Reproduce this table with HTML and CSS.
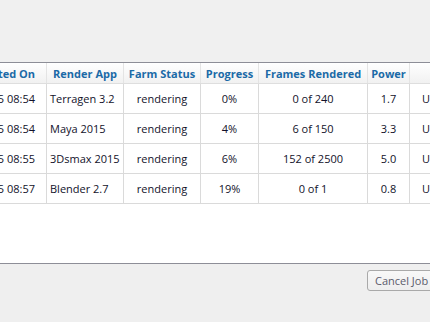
FILE: index.html
```html
<!DOCTYPE html>
<html>
<head>
<meta charset="utf-8">
<link rel="stylesheet" href="styles.css">
</head>
<body>
<div class="window">
  <div class="toolbar-space"></div>
  <div class="grid-panel">
    <div class="grid">
      <div class="row head">
        <div class="cell c-date">Submitted On</div>
        <div class="cell">Render App</div>
        <div class="cell">Farm Status</div>
        <div class="cell">Progress</div>
        <div class="cell">Frames Rendered</div>
        <div class="cell">Power</div>
        <div class="cell c-user">Submitted By</div>
      </div>
      <div class="row">
        <div class="cell c-date">03/25/2015 08:54</div>
        <div class="cell c-app">Terragen 3.2</div>
        <div class="cell">rendering</div>
        <div class="cell">0%</div>
        <div class="cell">0 of 240</div>
        <div class="cell">1.7</div>
        <div class="cell c-user">Unknown</div>
      </div>
      <div class="row">
        <div class="cell c-date">03/25/2015 08:54</div>
        <div class="cell c-app">Maya 2015</div>
        <div class="cell">rendering</div>
        <div class="cell">4%</div>
        <div class="cell">6 of 150</div>
        <div class="cell">3.3</div>
        <div class="cell c-user">Unknown</div>
      </div>
      <div class="row">
        <div class="cell c-date">03/25/2015 08:55</div>
        <div class="cell c-app">3Dsmax 2015</div>
        <div class="cell">rendering</div>
        <div class="cell">6%</div>
        <div class="cell">152 of 2500</div>
        <div class="cell">5.0</div>
        <div class="cell c-user">Unknown</div>
      </div>
      <div class="row">
        <div class="cell c-date">03/25/2015 08:57</div>
        <div class="cell c-app">Blender 2.7</div>
        <div class="cell">rendering</div>
        <div class="cell">19%</div>
        <div class="cell">0 of 1</div>
        <div class="cell">0.8</div>
        <div class="cell c-user">Unknown</div>
      </div>
    </div>
  </div>
  <div class="footer">
    <button class="btn" type="button">Cancel Job</button>
  </div>
</div>
</body>
</html>
```

FILE: styles.css
```css
html, body {
  margin: 0;
  padding: 0;
}

body {
  width: 430px;
  height: 322px;
  overflow: hidden;
  background: #efefef;
  font-family: "Open Sans", "Noto Sans", sans-serif;
  font-size: 11px;
  color: #12122a;
}

.window {
  display: flex;
  flex-direction: column;
  height: 322px;
}

.toolbar-space {
  height: 62px;
  background: #f0f0f0;
}

.grid-panel {
  height: 200px;
  background: #ffffff;
  border-top: 1px solid #8d8e97;
  border-bottom: 1px solid #8d8e97;
  overflow: hidden;
}

.grid {
  margin-left: -80px;
  width: 620px;
}

.row {
  display: grid;
  grid-template-columns: 127px 77px 77px 58px 109px 42px 130px;
  height: 30px;
  box-sizing: border-box;
  border-bottom: 1px solid #dadada;
}

.row.head {
  height: 21px;
  background: linear-gradient(#ffffff, #f1f1f1);
  border-bottom-color: #dedede;
  color: #1b6aa7;
  font-weight: 700;
}

.cell {
  display: flex;
  align-items: center;
  justify-content: center;
  white-space: nowrap;
  overflow: hidden;
  border-right: 1px solid #dadada;
}

.row.head .cell {
  border-right-color: #e4e4e4;
}

.cell.c-date {
  justify-content: flex-end;
  padding-right: 11px;
}

.cell.c-app {
  justify-content: flex-start;
  padding-left: 3px;
}

.row .cell.c-user {
  justify-content: flex-start;
  padding-left: 12px;
}

.row.head .cell.c-user {
  padding-left: 30px;
}

.footer {
  flex: 1;
  display: flex;
  justify-content: flex-end;
  align-items: flex-start;
  padding-top: 6px;
  overflow: hidden;
}

.btn {
  margin-right: -20px;
  width: 83px;
  height: 21px;
  padding: 0 0 0 7px;
  text-align: left;
  font-family: "Open Sans", "Noto Sans", sans-serif;
  font-size: 11px;
  color: #5b5b6b;
  background: linear-gradient(#f8f8f8, #eeeeee);
  border: 1px solid #a9a9a9;
  border-radius: 3px;
}
```
